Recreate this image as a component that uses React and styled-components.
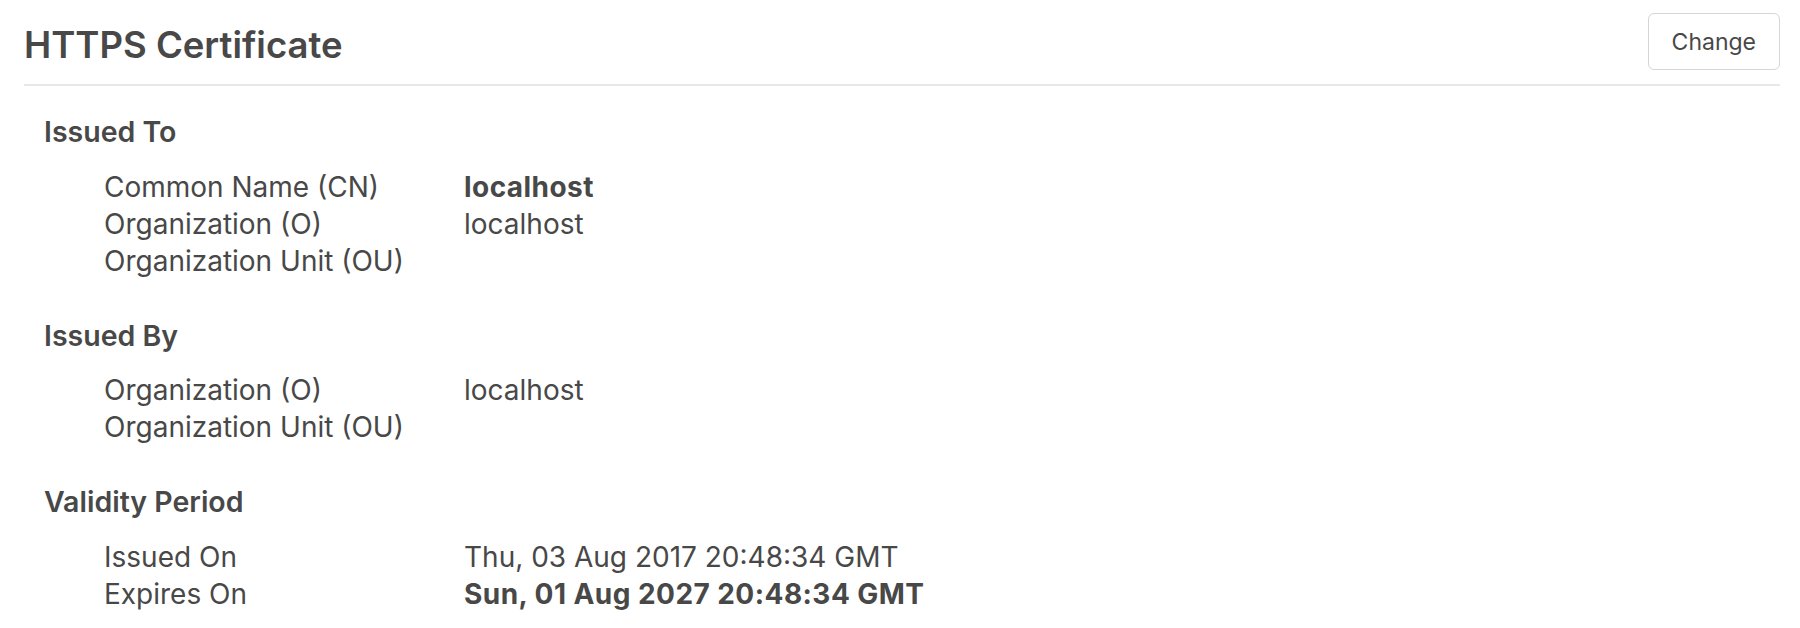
import styled, { createGlobalStyle } from 'styled-components';

const GlobalStyle = createGlobalStyle`
  body {
    margin: 0;
    background: #ffffff;
    font-family: Inter, "Liberation Sans", sans-serif;
    color: #484848;
  }
`;

const Page = styled.div`
  padding: 13px 20px 0 24px;
`;

const Header = styled.div`
  display: flex;
  justify-content: space-between;
  align-items: flex-start;
  padding-bottom: 14px;
  border-bottom: 2px solid #e7e8ea;
`;

const Title = styled.h1`
  margin: 14px 0 0 0;
  font-size: 36.5px;
  line-height: 36px;
  font-weight: 600;
`;

const Button = styled.button`
  height: 57px;
  padding: 0 23px;
  font-family: inherit;
  font-size: 23px;
  color: #484848;
  background: #ffffff;
  border: 1.5px solid #d3d6da;
  border-radius: 6px;
`;

const Body = styled.div`
  display: flex;
  flex-direction: column;
  gap: 38px;
  padding-top: 28px;
`;

const Section = styled.section`
  display: flex;
  flex-direction: column;
  gap: 18.5px;
`;

const Heading = styled.h2`
  margin: 0;
  padding-left: 20px;
  font-size: 28.5px;
  line-height: 36px;
  font-weight: 600;
`;

const Rows = styled.dl`
  display: grid;
  grid-template-columns: 360px 1fr;
  margin: 0;
  padding-left: 80px;
  font-size: 28px;
  line-height: 37px;
`;

const Label = styled.dt`
  margin: 0;
`;

const Value = styled.dd`
  margin: 0;
  font-weight: ${(p) => (p.$bold ? 700 : 400)};
  letter-spacing: ${(p) => (p.$bold ? '0.45px' : 'normal')};
`;

const sections = [
  {
    title: 'Issued To',
    rows: [
      ['Common Name (CN)', 'localhost', true],
      ['Organization (O)', 'localhost'],
      ['Organization Unit (OU)', ''],
    ],
  },
  {
    title: 'Issued By',
    rows: [
      ['Organization (O)', 'localhost'],
      ['Organization Unit (OU)', ''],
    ],
  },
  {
    title: 'Validity Period',
    rows: [
      ['Issued On', 'Thu, 03 Aug 2017 20:48:34 GMT'],
      ['Expires On', 'Sun, 01 Aug 2027 20:48:34 GMT', true],
    ],
  },
];

export default function App() {
  return (
    <>
      <GlobalStyle />
      <Page>
        <Header>
          <Title>HTTPS Certificate</Title>
          <Button>Change</Button>
        </Header>
        <Body>
          {sections.map((s) => (
            <Section key={s.title}>
              <Heading>{s.title}</Heading>
              <Rows>
                {s.rows.map(([label, value, bold]) => (
                  <>
                    <Label key={label}>{label}</Label>
                    <Value $bold={bold}>{value}</Value>
                  </>
                ))}
              </Rows>
            </Section>
          ))}
        </Body>
      </Page>
    </>
  );
}
